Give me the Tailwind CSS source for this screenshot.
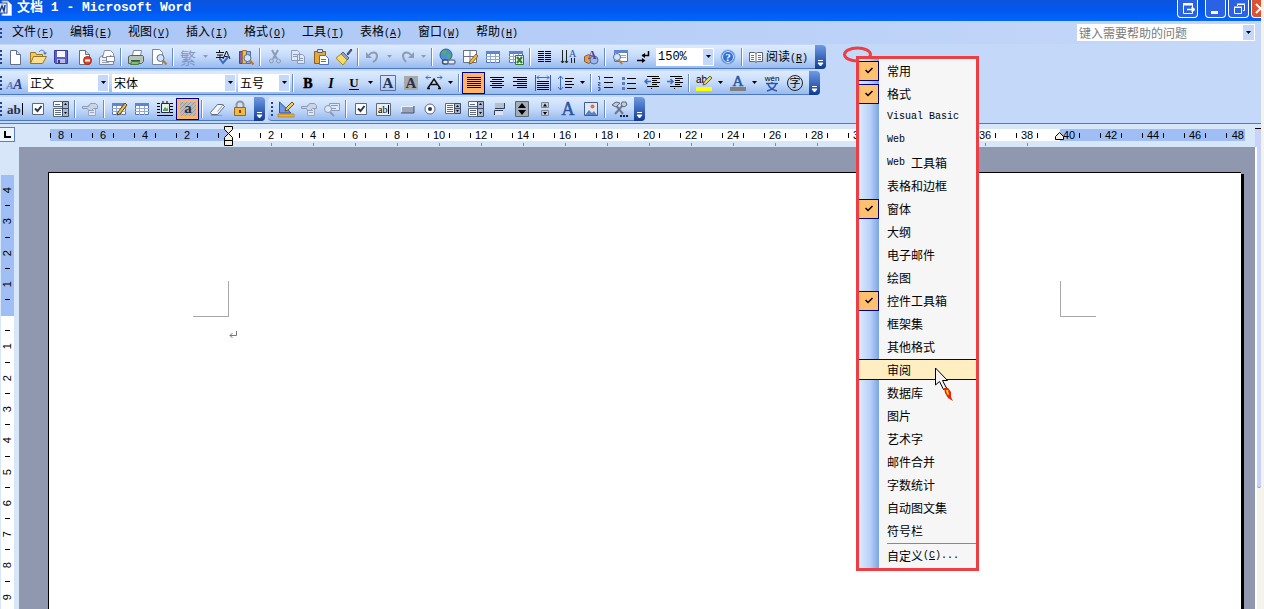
<!DOCTYPE html>
<html lang="zh-CN">
<head>
    <meta charset="UTF-8">
    <meta name="viewport" content="width=device-width, initial-scale=1.0">
    <title>文档 1 - Microsoft Word</title>
    <script src="https://cdn.jsdelivr.net/npm/@tailwindcss/browser@4"></script>
</head>
<body class="relative flex h-screen flex-col overflow-hidden bg-[#c4d9f9] pr-[3px] font-['Noto_Sans_CJK_SC',sans-serif] text-xs text-black">

    <!-- Title bar -->
    <header class="flex h-[21px] shrink-0 items-start justify-between overflow-hidden bg-linear-to-b from-[#0a55dc] via-[#0058ee] to-[#0066ff]">
        <div class="flex items-center gap-[5px]">
            <svg class="h-4 w-3" viewBox="0 0 12 16">
                <path d="M2 1h6l4 4v11H2z" fill="#fff" stroke="#8a9cc0"/>
                <rect x="-4" y="3" width="11" height="10" fill="#dfe9fb" stroke="#2b4fa0"/>
                <path d="M-2 5l2 6 2-5 2 5 1-6" fill="none" stroke="#1c3f94" stroke-width="1.5"/>
            </svg>
            <h1 class="font-['Liberation_Mono','Noto_Sans_CJK_SC',monospace] text-[13px] leading-4 font-bold whitespace-pre text-white">文档 1 - Microsoft Word</h1>
        </div>
        <div class="flex">
            <button aria-label="弹出" class="mr-[7px] h-[18px] w-[21px] rounded-b border border-t-0 border-white bg-[#2b62e3]">
                <svg class="mx-auto h-4 w-4" viewBox="0 0 16 16" fill="none" stroke="#fff"><path d="M12.500 6V2.500h-9v10h9V11"/><path d="M3 3.500h10" stroke-width="2"/><path d="M7 8.500h7" stroke-width="1.500"/><path d="M12 6v5l3-2.500z" fill="#fff"/></svg>
            </button>
            <button aria-label="最小化" class="mr-[2px] h-[18px] w-[21px] rounded-b border border-t-0 border-white bg-[#2b62e3]">
                <svg class="mx-auto h-4 w-4" viewBox="0 0 16 16"><path d="M3 10h7v3H3z" fill="#fff"/></svg>
            </button>
            <button aria-label="还原" class="mr-[2px] h-[18px] w-[21px] rounded-b border border-t-0 border-white bg-[#2b62e3]">
                <svg class="mx-auto h-4 w-4" viewBox="0 0 16 16" fill="none" stroke="#fff"><path d="M6.500 5V3.500h7v6H12M6 3h8"/><path d="M3.500 6.500h7v6h-7zM3 6h8"/></svg>
            </button>
            <button aria-label="关闭" class="h-[18px] w-[10px] overflow-hidden rounded-bl border border-t-0 border-r-0 border-white bg-[#dd5130]">
                <svg class="h-4 w-4" viewBox="0 0 16 16"><path d="M4 3l9 9M13 3l-9 9" stroke="#fff" stroke-width="2"/></svg>
            </button>
        </div>
    </header>

    <!-- Menu bar -->
    <nav class="flex h-[23px] shrink-0 items-center bg-linear-to-r from-[#a9c5f5] to-[#c6d8f9]">
        <svg class="h-4 w-[3px]" viewBox="0 0 3 16" fill="#27418a"><path d="M0 3h2v2H0zM0 7h2v2H0zM0 11h2v2H0z"/></svg>
        <div id="menuBar" class="flex flex-1"></div>
        <div class="mr-[6px] flex h-[17px] w-[178px] bg-white">
            <input aria-label="帮助" placeholder="键入需要帮助的问题" class="min-w-0 flex-1 pl-[2px] text-xs leading-4 outline-none placeholder:text-[#7b7b7b]">
            <button aria-label="帮助列表" class="m-px flex w-[11px] items-center justify-center bg-[#c4d9f9]">
                <svg class="h-[3px] w-[5px]" viewBox="0 0 5 3"><path d="M0 0h5L2.500 3z"/></svg>
            </button>
        </div>
    </nav>

    <!-- Toolbars -->
    <div class="flex h-[79px] shrink-0 flex-col items-start gap-[2px] pt-px">
        <div id="standardBar" role="toolbar" aria-label="常用" class="flex h-6 items-center rounded-r border-b border-[#4a78c8] bg-linear-to-b from-[#deebfe] via-[#c5dbfa] to-[#98baee]"></div>
        <div id="formatBar" role="toolbar" aria-label="格式" class="flex h-6 items-center rounded-r border-b border-[#4a78c8] bg-linear-to-b from-[#deebfe] via-[#c5dbfa] to-[#98baee]"></div>
        <div class="flex gap-[3px]">
            <div id="formsBar" role="toolbar" aria-label="窗体" class="flex h-6 items-center rounded-r border-b border-[#4a78c8] bg-linear-to-b from-[#deebfe] via-[#c5dbfa] to-[#98baee]"></div>
            <div id="controlBar" role="toolbar" aria-label="控件工具箱" class="flex h-6 items-center rounded border-b border-[#4a78c8] bg-linear-to-b from-[#deebfe] via-[#c5dbfa] to-[#98baee] pl-[3px]"></div>
        </div>
    </div>

    <!-- Horizontal ruler -->
    <div class="flex h-6 shrink-0 border-t border-[#77786c] bg-[#d8e6fa]">
        <button aria-label="制表符" class="mt-[3px] flex h-[15px] w-[15px] shrink-0 items-center justify-center border border-l-0 border-[#5a7ccc] bg-[#eef4fe]">
            <svg class="h-[7px] w-[7px]" viewBox="0 0 7 7"><path d="M1 0v6h6" fill="none" stroke="#000" stroke-width="2"/></svg>
        </button>
        <div class="relative ml-[35px] min-w-0 flex-1">
            <div id="hRuler" class="mt-[5px] mr-[10px] flex h-[18px] overflow-hidden bg-[linear-gradient(to_right,#9ebef5_178px,#fff_178px,#fff_1010px,#9ebef5_1010px)] bg-[size:100%_12px] bg-no-repeat"></div>
            <svg class="absolute top-[2px] left-[173px] h-[21px] w-[11px]" viewBox="0 0 11 21" fill="#f4f0e0" stroke="#000"><path d="M1.500.500h8v3l-4 4-4-4zM5.500 7.500l4 4v3h-8v-3zM1.500 14.500h8v5h-8z"/></svg>
            <svg class="absolute top-[8px] left-[1005px] h-[9px] w-[10px]" viewBox="0 0 10 9" fill="#f4f0e0" stroke="#000"><path d="M4.500.500l4 4v3h-8v-3z"/></svg>
        </div>
        <div class="mt-[4px] w-[6px] shrink-0 border-t border-black bg-[#c9d2fa]"></div>
    </div>

    <!-- Vertical ruler, page and scroll bar -->
    <main class="flex min-h-0 flex-1 bg-[#d8e6fa]">
        <div class="w-[19px] shrink-0 overflow-hidden pt-7 pl-px">
            <div id="vRuler" class="flex h-[438px] w-[13px] flex-col bg-[linear-gradient(to_bottom,#9ebef5_141px,#fff_141px)]"></div>
        </div>
        <div class="flex flex-1 bg-[#8f98ae] pt-[25px] pr-[11px] pl-[29px]">
            <div class="relative flex-1 border-t border-l border-black bg-white">
                <div class="absolute top-[108px] left-[144px] h-9 w-9 border-r border-b border-[#a8a8a8]"></div>
                <div class="absolute top-[108px] left-[1011px] h-9 w-9 border-b border-l border-[#a8a8a8]"></div>
                <svg class="absolute top-[157px] left-[180px] h-[9px] w-2" viewBox="0 0 8 9"><path d="M7.500 1v4.500H1M3.500 3L1 5.500 3.500 8" fill="none" stroke="#777"/></svg>
            </div>
            <div class="mt-[2px] w-[3px] bg-black"></div>
        </div>
        <div class="w-[6px] border-l-2 border-white bg-[#f4f4ef]">
            <div class="h-[341px] rounded-b-sm border-b border-[#8f9cc8] bg-[#c9d2fa]"></div>
        </div>
    </main>

    <div class="absolute inset-y-0 right-0 w-[3px] bg-[#f6f3ec]"></div>

    <!-- Toolbar list -->
    <svg class="absolute top-[46px] left-[843px] h-[18px] w-[30px]" viewBox="0 0 30 18"><ellipse cx="14.500" cy="8.500" rx="13" ry="6.500" fill="none" stroke="#ee3e44" stroke-width="3"/></svg>
    <div id="popup" role="menu" class="absolute top-[56px] left-[856px] w-[123px] border-3 border-[#ee3e44] bg-[#f6f6f6] bg-[linear-gradient(to_right,#dbe9fd,#b9d2f8_11px,#7ba4e4_20px,#f6f6f6_20px)]"></div>
    <svg class="absolute top-[367px] left-[934px] h-9 w-5" viewBox="0 0 20 36">
        <path d="M1.500 1v17l4-3.500 4 8 3-1.500-4-7.500h5z" fill="#f6f4f0" stroke="#000"/>
        <path d="M10 21h4l3 4v5l2 4-5-3-3-5z" fill="#e8200c"/>
        <path d="M12 23h2l1 5-2-1z" fill="#ffe600"/>
    </svg>

    <script>
        const g = '#8d9ab5';

        const button = (label, art, active) => `
            <button aria-label="${label}" class="${active
                ? 'flex h-[22px] w-[23px] items-center justify-center border border-[#000080] bg-[#ffb366]'
                : 'flex h-[22px] w-[23px] items-center justify-center'}">
                <svg class="h-[18px] w-[18px] shrink-0" viewBox="0 0 18 18">${art}</svg>
            </button>`;
        const sep = () => '<span class="flex h-[18px] w-[6px] justify-center"><i class="w-px bg-[#6a8ccb]"></i><i class="w-px bg-white"></i></span>';
        const drop = (label, color = '#000') => `
            <button aria-label="${label}" class="flex h-[22px] w-[11px] items-center justify-center">
                <svg class="h-[3px] w-[5px]" viewBox="0 0 5 3"><path d="M0 0h5L2.500 3z" fill="${color}"/></svg>
            </button>`;
        const select = (label, value, size) => `
            <label class="${size} flex h-[18px] bg-white">
                <select aria-label="${label}" class="min-w-0 flex-1 appearance-none bg-white pl-[2px] text-xs leading-4 outline-none"><option>${value}</option></select>
                <span class="pointer-events-none m-px flex w-[10px] items-center justify-center bg-[#c4d9f9]">
                    <svg class="h-[3px] w-[5px]" viewBox="0 0 5 3"><path d="M0 0h5L2.500 3z"/></svg>
                </span>
            </label>`;
        const grip = () => '<svg class="h-[18px] w-[3px]" viewBox="0 0 3 18" fill="#27418a"><path d="M0 2h2v2H0zM0 6h2v2H0zM0 10h2v2H0zM0 14h2v2H0z"/></svg>';
        const end = () => `
            <button aria-label="工具栏选项" class="ml-[3px] flex h-6 w-[11px] items-end justify-center rounded-r bg-linear-to-b from-[#6f9ae6] to-[#0e3a94] pb-[2px]">
                <svg class="h-[8px] w-[7px]" viewBox="0 0 7 8"><path d="M1 1.500h5" stroke="#fff"/><path d="M1 4h5L3.500 7z" fill="#fff" stroke="#fff"/></svg>
            </button>`;

        // shared pieces of the icons
        const letter = (t, x, y, size, fill, extra = '') => `<text x="${x}" y="${y}" font-size="${size}" fill="${fill}" text-anchor="middle" font-family="Liberation Serif, serif" ${extra}>${t}</text>`;
        const page = '<path d="M4.500 2.500h6l4 4v10h-10z" fill="#fff" stroke="#66708a"/><path d="M10.500 2.500v4h4" fill="#c9d6ef" stroke="#66708a"/>';
        const lines = (rows) => `<path d="${rows.map(([x, y, w]) => `M${x} ${y}.5h${w}`).join('')}" stroke="#000" fill="none"/>`;
        const grid = '<path d="M2.500 3.500h13v11h-13z" fill="#fff" stroke="#5275b8"/><path d="M2 3h14v3H2z" fill="#5f86cc"/><path d="M2 8.500h14M2 11.500h14M6.500 6v9M11.500 6v9" stroke="#8ea9d8"/>';
        const lens = '<circle cx="10.500" cy="10" r="3.500" fill="#cfe6fa" stroke="#5d6f90"/><path d="M13 12.500l3.500 4" stroke="#c07a28" stroke-width="2"/>';
        const hand = '<path d="M7.500 5.500h7v10h-7z" fill="#dfe6f2" stroke="#9aa7bf"/><path d="M9 10.500h4M9 12.500h4" stroke="#9aa7bf"/><path d="M1.500 6.500h6l2-3h5l2 2v3h-4l-2 2h-3l-1-2h-5z" fill="#cbd4e4" stroke="#8f9cb6"/>';
        const check = '<path d="M3.500 3.500h11v11h-11z" fill="#fff" stroke="#5c6b85"/><path d="M6 8.500L8.500 11 12.500 6" fill="none" stroke="#2a3550" stroke-width="2"/>';
        const combo = '<path d="M1.500 1.500h14v5h-14z" fill="#fff" stroke="#5c6b85"/><path d="M1.500 8.500h9v8h-9z" fill="#fff" stroke="#5c6b85"/><path d="M3 4.500h5M3 10.500h6M3 12.500h6M3 14.500h6" stroke="#5c6b85"/><path d="M10.500 1.500h6v15h-6z" fill="#a9b8d0" stroke="#3f4d66"/><path d="M12 5h3l-1.500-2zM12 12h3l-1.500 2z" fill="#000"/><path d="M11 8.500h5" stroke="#3f4d66"/>';

        document.getElementById('menuBar').innerHTML = [
            ['文件', 'F'], ['编辑', 'E'], ['视图', 'V'], ['插入', 'I'], ['格式', 'O'],
            ['工具', 'T'], ['表格', 'A'], ['窗口', 'W'], ['帮助', 'H']
        ].map(([name, key]) => `
            <button class="w-[58px] pl-[9px] text-left leading-5 whitespace-nowrap">${name}<span class="font-['Liberation_Mono',monospace] text-[10px]">(<u>${key}</u>)</span></button>`).join('');

        document.getElementById('standardBar').innerHTML = [
            grip(),
            button('新建', page),
            button('打开', '<path d="M1.500 15.500v-11h5l1 2h6v3" fill="#f2c95c" stroke="#9c7420"/><path d="M1.500 15.500l3-7h13l-4 7z" fill="#ffe08a" stroke="#9c7420"/><path d="M10 4c2-3 5-2 6 1" fill="none" stroke="#4a74c0"/><path d="M14 4.500h4l-2 2.500z" fill="#4a74c0"/>'),
            button('保存', '<path d="M2.500 2.500h13v13h-12l-1-1z" fill="#5e5fc4" stroke="#3a3b94"/><path d="M5 3h8v6H5z" fill="#f5f6ff"/><path d="M5 11h8v4H5z" fill="#b9bde0"/><path d="M6 12h2v3H6z" fill="#33358a"/>'),
            button('权限', page + '<circle cx="12.500" cy="12.500" r="4" fill="#e0452c" stroke="#a82814"/><path d="M10 12.500h5" stroke="#fff" stroke-width="2"/>'),
            button('电子邮件', '<path d="M4.500 9.500l2-7h6l3 3v6" fill="#fff" stroke="#8691a8"/><path d="M1.500 9.500l3-2v2h8v-2l3 2v7h-14z" fill="#eef1f7" stroke="#7c879e"/><path d="M8.500 8.500h8v5h-8z" fill="#fff" stroke="#7c879e"/><path d="M4 12.500h4M4 14.500h7" stroke="#99a4b8"/>'),
            sep(),
            button('打印', '<path d="M5.500 7.500l1-5h8l-1 5z" fill="#fff" stroke="#7c879e"/><path d="M1.500 8.500l2-1h12l1 1v5l-2 2h-13z" fill="#b7c3b8" stroke="#53645a"/><path d="M4 12.500h9" stroke="#3d4f46"/><path d="M4.500 13.500h8l-1 3h-8z" fill="#7bbf6a" stroke="#4b7c46"/>'),
            button('打印预览', '<path d="M2.500 1.500h7l3 3v12h-10z" fill="#fff" stroke="#7c879e"/>' + lens),
            sep(),
            '<button aria-label="繁体" class="h-[22px] w-6 text-base leading-5 text-[#7d96c8]">繁</button>',
            drop('中文简繁转换', g),
            button('拼写和语法', '<path d="M2 4.500h8M5.500 2v2M3 7h6M6 7v5M2 9.500h8M12.500 3L9 11M12.500 3l3.500 8M10.500 8.500h5" stroke="#111" fill="none"/><path d="M6 11l3 4 6-7" fill="none" stroke="#3a6cc4" stroke-width="2"/>'),
            button('信息检索', '<path d="M2.500 3.500h3v12h-3z" fill="#8a5ab8" stroke="#5c3a8a"/><path d="M5.500 2.500h4v13h-4z" fill="#f0bd48" stroke="#a07820"/><path d="M9.500 3.500h4v12h-4z" fill="#8fb0e8" stroke="#4a6cac"/>' + lens),
            sep(),
            button('剪切', `<path d="M6 2l5 9M12 2l-5 9" stroke="${g}" stroke-width="2" fill="none"/><circle cx="5.500" cy="13" r="2" fill="none" stroke="${g}"/><circle cx="12.500" cy="13" r="2" fill="none" stroke="${g}"/>`),
            button('复制', `<path d="M2.500 2.500h6l2 2v8h-8zM8.500 6.500h5l2 2v7h-7z" fill="#dfe8f8" stroke="${g}"/><path d="M4 6.500h4M4 8.500h4M10 10.500h4M10 12.500h4" stroke="${g}"/>`),
            button('粘贴', '<path d="M2.500 3.500h11v12h-11z" fill="#e8a838" stroke="#8c6018"/><path d="M5.500 1.500h5v3h-5z" fill="#d8dce4" stroke="#5c6474"/><path d="M7.500 7.500h6l3 3v6h-9z" fill="#fff" stroke="#5272b0"/><path d="M9 11.500h5M9 13.500h5" stroke="#5272b0"/>'),
            button('格式刷', '<path d="M12 6l4-5 1 1-4 5z" fill="#56658c" stroke="#39466a"/><path d="M8 4l6 6-2 2-6-6z" fill="#8fa2cc" stroke="#4d5f8c"/><path d="M6 6l6 6-4 5-7-7z" fill="#f8dc62" stroke="#a88820"/>'),
            sep(),
            button('撤消', `<path d="M5 7c3-4 8-3 8 1 0 3-2 5-4 6" fill="none" stroke="${g}" stroke-width="2"/><path d="M2 4v6h6z" fill="${g}"/>`),
            drop('撤消列表', g),
            button('恢复', `<path d="M13 7c-3-4-8-3-8 1 0 3 2 5 3 6" fill="none" stroke="${g}" stroke-width="2"/><path d="M16 4v6h-6z" fill="${g}"/>`),
            drop('恢复列表', g),
            sep(),
            button('插入超链接', '<circle cx="8" cy="7" r="6" fill="#4a90d8" stroke="#2c5c9c"/><path d="M4 4c2-2 4-2 5-1l-1 3-3 1zM9 7l4-1-1 4-3 1z" fill="#5cb04c"/><rect x="4.500" y="12" width="6" height="4" rx="2" fill="#e8eef8" stroke="#3c4c70" stroke-width="1.500"/><rect x="10" y="12" width="7" height="4" rx="2" fill="#e8eef8" stroke="#6c7ca0" stroke-width="1.500"/>'),
            button('表格和边框', '<path d="M2.500 2.500h13v12h-13zM9 3v11M3 8.500h12" fill="#fff" stroke="#66708a"/><path d="M8 16l1-3 6-7 2 2-6 7z" fill="#f0bd48" stroke="#8c5a18"/>'),
            button('插入表格', grid),
            button('插入 Excel 工作表', grid + '<path d="M8.500 7.500h8v9h-8z" fill="#e4f4e0" stroke="#2e7d32"/><path d="M10 9l5 6M15 9l-5 6" stroke="#2e7d32" stroke-width="2"/>'),
            sep(),
            button('分栏', lines([[2, 3, 6], [2, 5, 6], [2, 7, 6], [2, 9, 6], [2, 11, 6], [2, 13, 6], [9, 3, 6], [9, 5, 6], [9, 7, 6], [9, 9, 6], [9, 11, 6], [9, 13, 6]])),
            button('更改文字方向', '<path d="M3.500 2v13M7.500 2v13M12.500 10v5M15.500 10v5M2 13l1.500 2L5 13M6 13l1.500 2L9 13" stroke="#222" fill="none"/>' + letter('A', 13.5, 9, 10, '#2b559f')),
            button('绘图', '<path d="M2.500 8.500l4-2 4 2v5l-4 2-4-2z" fill="#e0a050" stroke="#8c5a28"/><circle cx="12" cy="12" r="4" fill="#9cb8e8" stroke="#4a6cac"/>' + letter('A', 10, 11, 12, '#5a3a9c', 'font-weight="bold"')),
            sep(),
            button('文档结构图', '<path d="M3.500 2.500h13v11h-13z" fill="#fff" stroke="#5275b8"/><path d="M3 2h14v3H3z" fill="#5f86cc"/><path d="M9 7.500h6M9 9.500h6" stroke="#8ea9d8"/><circle cx="6" cy="9" r="3.500" fill="#cfe6fa" stroke="#5d6f90"/><path d="M8 12l3 4" stroke="#c07a28" stroke-width="2"/>'),
            button('显示编辑标记', '<path d="M14.500 3v4.500H8M3 12.500h6" stroke="#000" fill="none" stroke-width="1.500"/><path d="M11 5v5L7.500 7.500zM8 10v5l3.500-2.500z"/>'),
            select('显示比例', '150%', "mx-[2px] w-[58px] font-['Liberation_Mono','Noto_Sans_CJK_SC',monospace]"),
            button('帮助', '<circle cx="9" cy="9" r="7" fill="#2f6fd6" stroke="#8fb2ec"/><circle cx="9" cy="9" r="5.500" fill="none" stroke="#dce8fc"/>' + letter('?', 9, 13, 11, '#fff', 'font-weight="bold"')),
            sep(),
            `<button class="flex h-[22px] w-[67px] items-center gap-px pl-[2px] whitespace-nowrap">
                <svg class="h-[18px] w-[18px] shrink-0" viewBox="0 0 18 18"><path d="M2.500 4.500h5l1.500 1 1.500-1h5v9h-5l-1.500 1-1.500-1h-5z" fill="#fff" stroke="#5c6470"/><path d="M9 5.500v9M4 7.500h3M4 9.500h3M4 11.500h3M11 7.500h3M11 9.500h3M11 11.500h3" stroke="#6c7480"/></svg>
                <span>阅读<span class="font-['Liberation_Mono',monospace] text-[10px]">(<u>R</u>)</span></span>
            </button>`,
            end()
        ].join('');

        document.getElementById('formatBar').innerHTML = [
            grip(),
            button('样式和格式', letter('A', 4, 15, 11, '#5d7fc0', 'font-weight="bold" font-style="italic"') + letter('A', 12, 15, 14, '#2f3f9c', 'font-weight="bold" font-style="italic"')),
            select('样式', '正文', 'ml-[2px] w-[81px]'),
            select('字体', '宋体', 'ml-[3px] w-[124px]'),
            select('字号', '五号', 'ml-[2px] w-[52px]'),
            sep(),
            button('加粗', letter('B', 9, 14, 14, '#000', 'font-weight="bold" stroke="#000" stroke-width=".5"')),
            button('倾斜', letter('I', 9, 14, 14, '#000', 'font-weight="bold" font-style="italic"')),
            button('下划线', letter('U', 9, 13, 13, '#000', 'font-weight="bold"') + '<path d="M4 15.500h10" stroke="#000"/>'),
            drop('下划线列表'),
            button('字符边框', '<path d="M1.500 1.500h15v15h-15z" fill="none" stroke="#5c7098"/>' + letter('A', 9, 14, 15, '#26314a', 'font-weight="bold"')),
            button('字符底纹', '<path d="M2 2h14v14H2z" fill="#a9a9a9"/>' + letter('A', 9, 14, 15, '#26314a', 'font-weight="bold"')),
            button('字符缩放', '<path d="M2 14.500h3M13 14.500h3M3 14l6-9 6 9M6 10.500h6" fill="none" stroke="#111" stroke-width="1.500"/><path d="M1 3.500h5M3 1.500l-2 2 2 2M12 3.500h5M15 1.500l2 2-2 2" fill="none" stroke="#3a6cc4"/>'),
            drop('字符缩放列表'),
            sep(),
            button('两端对齐', lines([[2, 3, 14], [2, 5, 14], [2, 7, 14], [2, 9, 14], [2, 11, 14], [2, 13, 14]]), true),
            button('居中', lines([[2, 3, 14], [4, 5, 10], [2, 7, 14], [4, 9, 10], [2, 11, 14], [4, 13, 10]])),
            button('右对齐', lines([[2, 3, 14], [6, 5, 10], [2, 7, 14], [6, 9, 10], [2, 11, 14], [6, 13, 10]])),
            button('分散对齐', '<path d="M1.500 1v16M16.500 1v16" stroke="#3c5a9c"/><path d="M3 3.500h12M5 1.500l-2 2 2 2M13 1.500l2 2-2 2" stroke="#3a6cc4" fill="none"/>' + lines([[3, 7, 12], [3, 9, 12], [3, 11, 12], [3, 13, 12], [3, 15, 12]])),
            button('行距', '<path d="M3.500 2v14M1 5l2.500-3L6 5M1 13l2.500 3L6 13" stroke="#3a6cc4" fill="none"/>' + lines([[8, 4, 9], [8, 7, 7], [8, 10, 9], [8, 13, 7]])),
            drop('行距列表'),
            sep(),
            button('编号', '<path d="M1 2.500h1.500V6M1 8.500h2v1.500H1.500V11.500h2M1 13.500h2v3H1M1.500 15h1.500" stroke="#3a5ca8" fill="none"/>' + lines([[7, 3, 9], [7, 8, 9], [7, 13, 9]])),
            button('项目符号', '<path d="M2 3h3v3H2zM2 8h3v3H2zM2 13h3v3H2z" fill="#5c7cbc"/>' + lines([[7, 4, 9], [7, 9, 9], [7, 14, 9]])),
            button('减少缩进量', lines([[4, 2, 12], [9, 4, 8], [9, 6, 5], [9, 8, 8], [9, 10, 5], [4, 12, 12], [8, 14, 1]]) + '<path d="M8 7.500H2M4.500 5L2 7.500 4.500 10" stroke="#3a6cc4" stroke-width="1.500" fill="none"/>'),
            button('增加缩进量', lines([[4, 2, 12], [9, 4, 8], [9, 6, 5], [9, 8, 8], [9, 10, 5], [4, 12, 12], [8, 14, 1]]) + '<path d="M1 7.500h6M4.500 5L7 7.500 4.500 10" stroke="#3a6cc4" stroke-width="1.500" fill="none"/>'),
            sep(),
            button('突出显示', '<path d="M1 13h16v4H1z" fill="#ffff00"/><text x="1" y="9" font-size="10" font-family="Liberation Sans, sans-serif">ab</text><path d="M8 11l1-3 6-6 2 2-6 6z" fill="#e8d868" stroke="#66602c"/>'),
            drop('突出显示列表'),
            button('字体颜色', letter('A', 9, 12, 15, '#2b559f', 'stroke="#2b559f" stroke-width=".5"') + '<path d="M1 13h16v4H1z" fill="#808080"/>'),
            drop('字体颜色列表'),
            button('拼音指南', '<text x="9" y="7" font-size="8" text-anchor="middle" font-family="Liberation Sans, sans-serif">wén</text><path d="M3 9.500h12M9 8v2M5 10c1 3 5 6 9 7M13 10c-1 3-5 6-9 7" fill="none" stroke="#2b55b0" stroke-width="1.500"/>'),
            button('带圈字符', '<circle cx="9" cy="9" r="7.500" fill="none" stroke="#222"/><text x="9" y="13" font-size="11" text-anchor="middle" font-family="Noto Sans CJK SC, sans-serif">字</text>'),
            end()
        ].join('');

        document.getElementById('formsBar').innerHTML = [
            grip(),
            button('文字型窗体域', '<text x="1" y="14" font-size="13" font-weight="bold" fill="#26314a" font-family="Liberation Serif, serif">ab</text><path d="M16.500 3v12" stroke="#000"/>'),
            button('复选框型窗体域', check),
            button('下拉型窗体域', combo),
            sep(),
            button('窗体域选项', hand),
            sep(),
            button('绘制表格', grid + '<path d="M7 15l1-3 7-9 2 2-7 9z" fill="#f0bd48" stroke="#5c4418"/>'),
            button('插入表格', grid),
            button('插入图文框', '<path d="M5.500 3.500h8v9h-8z" fill="#e8f0e8" stroke="#1c2c3c"/><path d="M1 3.500h3M1 6.500h3M1 9.500h3M1 12.500h3M14 3.500h3M14 6.500h3M14 9.500h3M14 12.500h3M1 15.500h16M7 1v2M11 1v2" stroke="#000"/><path d="M7 10l2-3 2 2 1-2v4H7z" fill="#5c9c6c"/>'),
            button('窗体域底纹', '<path d="M1 2h16v14H1z" fill="#c8b8a0"/><path d="M1 5l3-3M1 9l7-7M1 13l11-11M2 16L16 2M6 16L17 5M10 16l7-7M14 16l3-3" stroke="#8d9cb8"/>' + letter('a', 9, 13, 15, '#26314a', 'font-weight="bold"'), true),
            sep(),
            button('重新设置窗体域', '<path d="M2.500 12.500l7-8h5l2 2-7 8h-6z" fill="#f4f6fa" stroke="#5c6b85"/><path d="M3 15.500h11M9.500 11.500l6-7" stroke="#8a98b4"/>'),
            button('保护窗体', '<path d="M5.500 8V5a3.500 3.500 0 0 1 7 0v3" fill="none" stroke="#8d94a4" stroke-width="2"/><path d="M3.500 7.500h11v8h-11z" fill="#f2b840" stroke="#94681c"/><path d="M9 10v3" stroke="#6c4810" stroke-width="2"/>'),
            end()
        ].join('');

        document.getElementById('controlBar').innerHTML = [
            grip(),
            button('设计模式', '<path d="M2.500 2v11H14z" fill="#6c9ae8" stroke="#2c55a8"/><path d="M1 14h16v3H1z" fill="#f0b030" stroke="#8c6018" stroke-width=".5"/><path d="M8 11l1-3 6-6 2 2-6 6z" fill="#f5cf5c" stroke="#6c5018"/>'),
            button('属性', hand),
            button('查看代码', `<path d="M6.500 3.500h10v7h-10z" fill="#dfe8f8" stroke="${g}"/><path d="M8 5.500h7M8 8.500h5" stroke="${g}"/><circle cx="5" cy="9" r="3.500" fill="#dfe8f8" stroke="${g}"/><path d="M7 12l4 4" stroke="${g}" stroke-width="2"/>`),
            sep(),
            button('复选框', check),
            button('文本框', '<path d="M1.500 3.500h14v12h-14z" fill="#e8edf6" stroke="#5c6b85"/><text x="3" y="13" font-size="10" font-family="Liberation Serif, serif">ab</text><path d="M13.500 5v9" stroke="#000"/>'),
            button('命令按钮', '<path d="M3 6h13v7H3z" fill="#9aa6ba"/><path d="M3 6h13l-1 1H4v5l-1 1z" fill="#eef2f8"/><path d="M3 13h13V6" fill="none" stroke="#46526a"/>'),
            button('选项按钮', '<circle cx="9" cy="9" r="5" fill="#fff" stroke="#5c6b85"/><circle cx="9" cy="9" r="2" fill="#2a3550"/>'),
            button('列表框', '<path d="M1.500 3.500h9v10h-9z" fill="#fff" stroke="#5c6b85"/><path d="M3 5.500h6M3 7.500h6M3 9.500h6M3 11.500h6" stroke="#5c6b85"/><path d="M10.500 3.500h6v10h-6z" fill="#a9b8d0" stroke="#3f4d66"/><path d="M12 7h3l-1.500-2zM12 10h3l-1.500 2z" fill="#000"/><path d="M11 8.500h5" stroke="#3f4d66"/>'),
            button('组合框', combo),
            button('切换按钮', '<path d="M5 3h9v5H5z" fill="#b4bfd0"/><path d="M5 8.500h9.500V3" fill="none" stroke="#2f3c54"/><path d="M4 10h9v5H4z" fill="#dce3ee"/><path d="M4.500 15v-4.500H13" fill="none" stroke="#2f3c54"/>'),
            button('数值调节钮', '<path d="M2.500 1.500h13v15h-13z" fill="#a4adba" stroke="#5c6674"/><path d="M5 8h8L9 3zM5 10h8l-4 5z" fill="#000"/>'),
            button('滚动条', '<path d="M5.500 2.500h7v5h-7zM5.500 10.500h7v5h-7z" fill="#c4ccd8" stroke="#7c879a"/><path d="M7 6.500h4l-2-3zM7 12h4l-2 3z" fill="#000"/>'),
            button('标签', letter('A', 9, 15, 18, '#2b559f', 'stroke="#2b559f" stroke-width=".5"')),
            button('图像', '<path d="M2.500 2.500h13v13h-13z" fill="#dce9fa" stroke="#3f5c94"/><path d="M3 15l4-5 3 3 2-2 3 4z" fill="#5c82c0"/><circle cx="10.500" cy="6.500" r="2" fill="#e87038"/>'),
            sep(),
            button('其他控件', '<path d="M4 14l8-9M3 3l9 11" stroke="#6c7890" stroke-width="2"/><path d="M1 5l4-3 4 1-4 4zM11 2h4l1 3-3 2-3-2z" fill="#c4ccdc" stroke="#5c6880"/><path d="M9 15h2v2H9zM12 15h2v2h-2zM15 15h2v2h-2z" fill="#10204c"/>'),
            end()
        ].join('');

        // horizontal ruler: -8 to 48, one cell for every second character
        let marks = '';
        for (let n = -8; n <= 48; n += 2) {
            marks += `<div class="mr-5 flex w-[22px] shrink-0 flex-col items-center last:mr-0 last:w-[18px]">
                <div class="flex h-3 w-full items-center justify-between font-['Liberation_Sans',sans-serif] text-[11px] leading-3">
                    <i class="h-[5px] w-px bg-black"></i>${n ? Math.abs(n) : ''}${n < 48 ? '<i class="h-[5px] w-px bg-black"></i>' : ''}
                </div>
                ${n > 0 && n < 40 ? '<i class="mt-[2px] h-[3px] w-px bg-[#7f8ba3]"></i>' : ''}
            </div>`;
        }
        document.getElementById('hRuler').innerHTML = marks;

        document.getElementById('vRuler').innerHTML = [4, 3, 2, 1, '', 1, 2, 3, 4, 5, 6, 7, 8, 9].map(n => `
            <div class="flex flex-1 flex-col items-center font-['Liberation_Sans',sans-serif] text-[11px] leading-3">
                <span class="flex flex-1 -rotate-90 items-center">${n}</span><i class="h-px w-[5px] bg-black"></i>
            </div>`).join('');

        const checked = ['常用', '格式', '窗体', '控件工具箱'];
        const latin = text => text.replace(/[A-Za-z][A-Za-z ]*/g, m => `<span class="font-['Liberation_Mono',monospace] text-[10px] whitespace-pre">${m}</span>`);
        document.getElementById('popup').innerHTML = [
            '常用', '格式', 'Visual Basic', 'Web', 'Web 工具箱', '表格和边框', '窗体', '大纲', '电子邮件', '绘图', '控件工具箱',
            '框架集', '其他格式', '审阅', '数据库', '图片', '艺术字', '邮件合并', '字数统计', '自动图文集', '符号栏'
        ].map(name => `
            <button role="menuitem" class="${name === '审阅'
                ? 'my-px flex h-[21px] w-full items-center border-y border-[#000080] bg-[#ffeec2] text-left'
                : 'flex h-[23px] w-full items-center text-left'}">
                ${checked.includes(name)
                    ? '<span class="mr-2 flex h-5 w-5 items-center justify-center border border-l-0 border-[#000080] bg-[#ffc06f]"><svg class="h-[7px] w-2" viewBox="0 0 8 7"><path d="M.500 3l2.500 2.500L7.500 1" fill="none" stroke="#000" stroke-width="1.500"/></svg></span>'
                    : '<span class="mr-2 w-5"></span>'}${latin(name)}
            </button>`).join('') + `
            <div role="separator" class="mt-px ml-7 h-px bg-[#6a8ccb]"></div>
            <button role="menuitem" class="flex h-6 w-full items-center pl-7 text-left">自定义<span class="font-['Liberation_Mono',monospace] text-[10px]">(<u>C</u>)...</span></button>`;
    </script>
</body>
</html>
